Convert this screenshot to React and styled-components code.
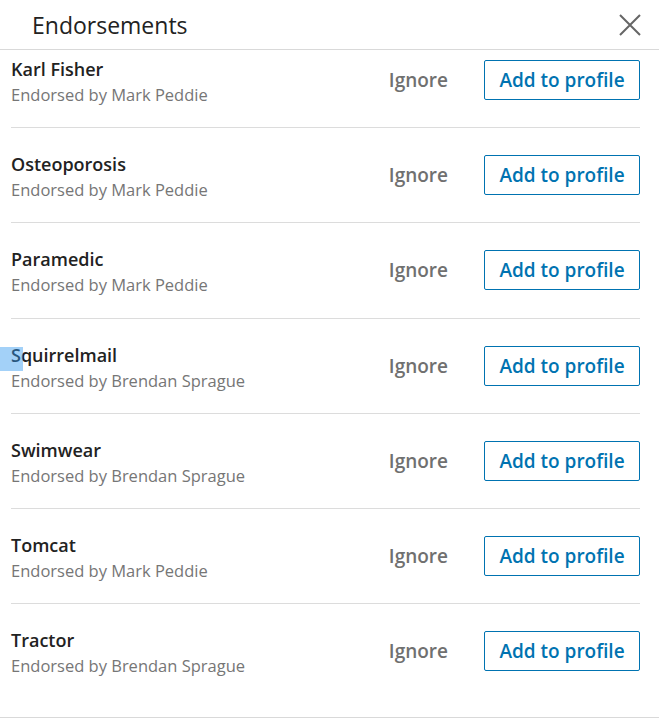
import React from "react";
import styled, { createGlobalStyle } from "styled-components";

const Global = createGlobalStyle`
  html, body { margin: 0; padding: 0; background: #fff; }
  body { font-family: "Open Sans", "Noto Sans", sans-serif; -webkit-font-smoothing: antialiased; }
`;

const Modal = styled.div`
  width: 659px;
  height: 725px;
  display: flex;
  flex-direction: column;
  background: #fff;
  overflow: hidden;
`;

const Header = styled.header`
  height: 50px;
  flex: none;
  display: flex;
  align-items: center;
  justify-content: space-between;
  padding: 0 17px 0 32px;
  border-bottom: 1px solid #d9d9d9;
  box-sizing: border-box;
`;

const Title = styled.h2`
  margin: 0;
  font-size: 23px;
  font-weight: 400;
  color: #222;
`;

const Close = styled.button`
  border: 0;
  background: none;
  padding: 0;
  width: 24px;
  height: 24px;
  display: flex;
  align-items: center;
  justify-content: center;
  cursor: pointer;
`;

const Body = styled.div`
  height: 667px;
  flex: none;
  overflow: hidden;
  border-bottom: 1px solid #d9d9d9;
  position: relative;
`;

const List = styled.ul`
  list-style: none;
  margin: -17px 0 0;
  padding: 0 19px 0 11px;
`;

const Row = styled.li`
  height: 94.2px;
  display: flex;
  align-items: center;
  border-bottom: ${(p) => (p.$last ? "none" : "1px solid #dcdcdc")};
  box-sizing: content-box;
  position: relative;
`;

const Info = styled.div`
  flex: 1;
  display: flex;
  flex-direction: column;
  margin-top: 4px;
`;

const Skill = styled.span`
  font-size: 18px;
  font-weight: 600;
  color: #222;
  line-height: 26px;
`;

const By = styled.span`
  font-size: 16.5px;
  color: #767676;
  line-height: 26px;
`;

const Ignore = styled.button`
  border: 0;
  background: none;
  font-family: inherit;
  font-size: 19px;
  font-weight: 600;
  color: #707070;
  padding: 0;
  margin-right: 36px;
  cursor: pointer;
`;

const AddBtn = styled.button`
  width: 156px;
  height: 40px;
  border: 1px solid #0073b1;
  border-radius: 2px;
  background: #fff;
  color: #0073b1;
  font-family: inherit;
  font-size: 19px;
  font-weight: 600;
  padding: 0;
  box-sizing: border-box;
  cursor: pointer;
`;

const Selection = styled.div`
  position: absolute;
  left: -11px;
  top: 28px;
  width: 23px;
  height: 24px;
  background: rgba(51, 153, 240, 0.45);
  pointer-events: none;
`;

const items = [
  ["Karl Fisher", "Mark Peddie"],
  ["Osteoporosis", "Mark Peddie"],
  ["Paramedic", "Mark Peddie"],
  ["Squirrelmail", "Brendan Sprague", true],
  ["Swimwear", "Brendan Sprague"],
  ["Tomcat", "Mark Peddie"],
  ["Tractor", "Brendan Sprague"],
];

export default function App() {
  return (
    <>
      <Global />
      <Modal>
        <Header>
          <Title>Endorsements</Title>
          <Close aria-label="Close">
            <svg width="22" height="22" viewBox="0 0 22 22">
              <path d="M1 1L21 21M21 1L1 21" stroke="#666" strokeWidth="2" fill="none" />
            </svg>
          </Close>
        </Header>
        <Body>
          <List>
            {items.map(([skill, by, sel], i) => (
              <Row key={skill} $last={i === items.length - 1}>
                {sel && <Selection />}
                <Info>
                  <Skill>{skill}</Skill>
                  <By>Endorsed by {by}</By>
                </Info>
                <Ignore>Ignore</Ignore>
                <AddBtn>Add to profile</AddBtn>
              </Row>
            ))}
          </List>
        </Body>
      </Modal>
    </>
  );
}
